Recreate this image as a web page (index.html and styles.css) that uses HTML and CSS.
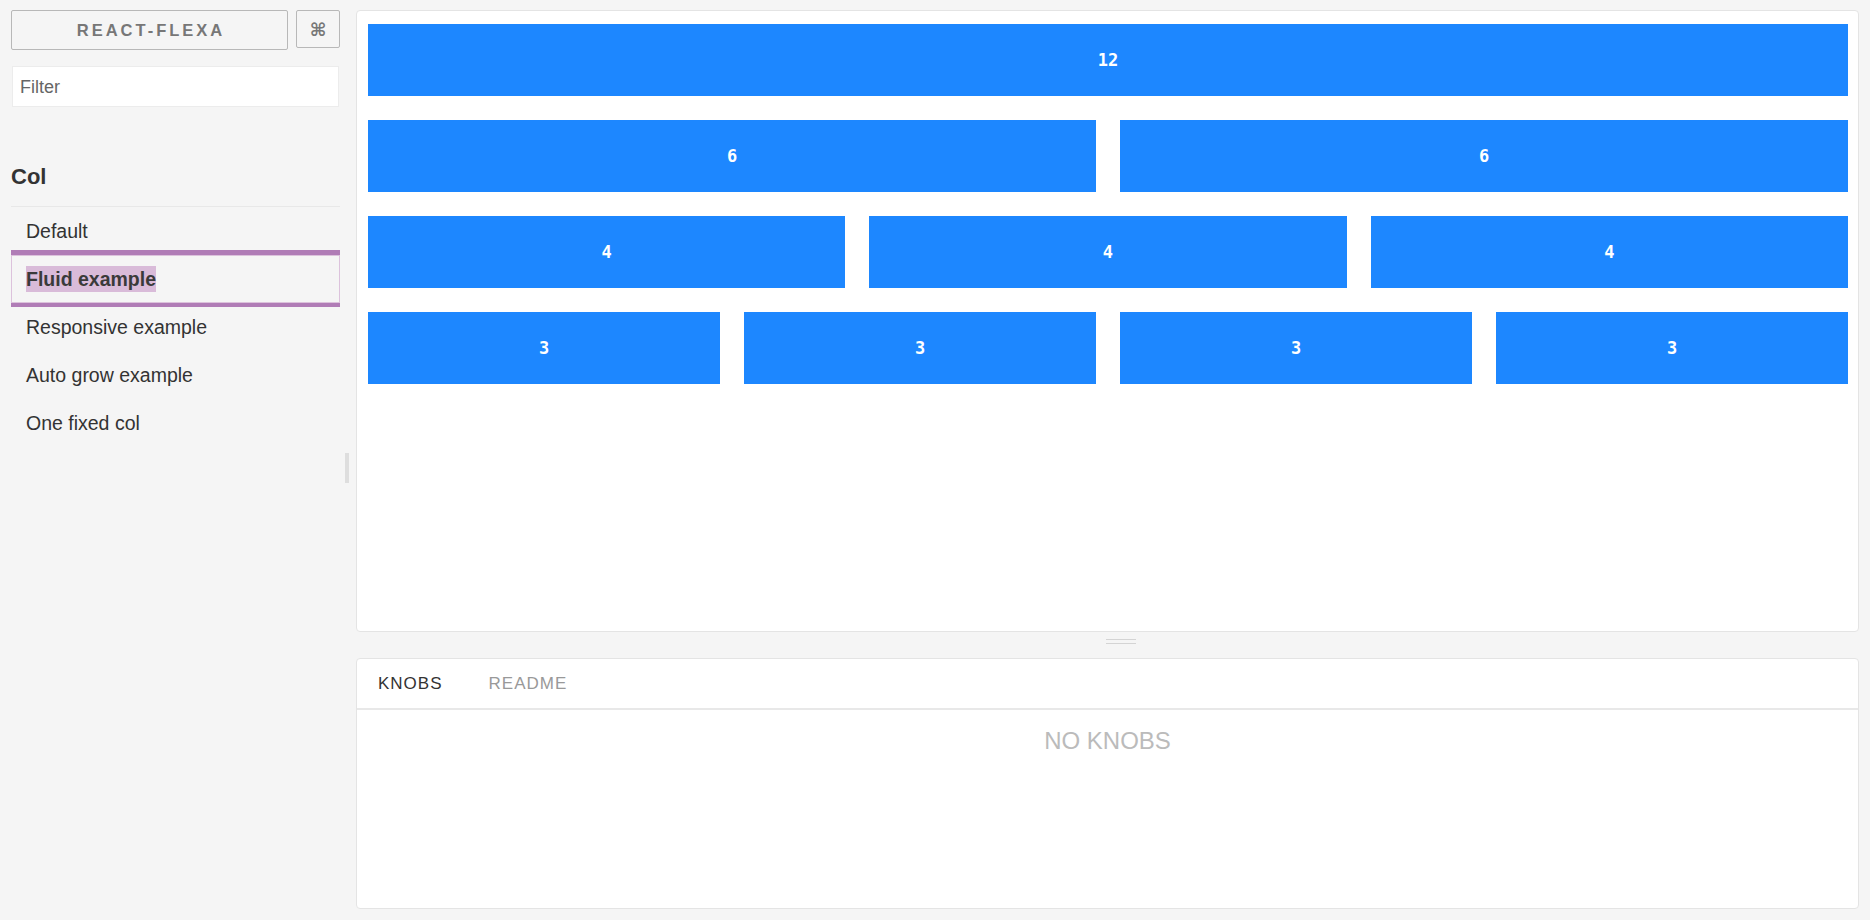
FILE: index.html
```html
<!DOCTYPE html>
<html>
<head>
<meta charset="utf-8">
<link rel="stylesheet" href="styles.css">
</head>
<body>
<div class="app">
  <aside class="sidebar">
    <div class="brand-row">
      <button class="brand">REACT-FLEXA</button>
      <button class="shortcut">⌘</button>
    </div>
    <input class="filter" type="text" placeholder="Filter">
    <h3 class="kind">Col</h3>
    <ul class="stories">
      <li class="story">Default</li>
      <li class="story active"><span class="sel">Fluid example</span></li>
      <li class="story">Responsive example</li>
      <li class="story">Auto grow example</li>
      <li class="story">One fixed col</li>
    </ul>
  </aside>
  <div class="v-resizer"><span class="v-handle"></span></div>
  <main class="main">
    <section class="preview">
      <div class="row"><div class="col c12">12</div></div>
      <div class="row"><div class="col">6</div><div class="col">6</div></div>
      <div class="row"><div class="col">4</div><div class="col">4</div><div class="col">4</div></div>
      <div class="row"><div class="col">3</div><div class="col">3</div><div class="col">3</div><div class="col">3</div></div>
    </section>
    <div class="h-resizer"><span class="h-handle"></span></div>
    <section class="addons">
      <nav class="tabs">
        <span class="tab active">KNOBS</span>
        <span class="tab">README</span>
      </nav>
      <div class="addon-body">NO KNOBS</div>
    </section>
  </main>
</div>
</body>
</html>
```

FILE: styles.css
```css
* { box-sizing: border-box; }
html, body { margin: 0; padding: 0; }
body {
  background: #f5f5f5;
  font-family: "Liberation Sans", Arial, Helvetica, sans-serif;
  color: #333;
}
.app {
  display: flex;
  height: 920px;
}
.sidebar {
  width: 340px;
  flex: none;
  padding: 10px 0 0 11px;
}
.brand-row {
  display: flex;
  align-items: flex-start;
  gap: 8px;
}
.brand {
  width: 277px;
  height: 40px;
  background: #f5f5f5;
  border: 1.5px solid #b8b8b8;
  border-radius: 2px;
  font-family: "Liberation Sans", Arial, sans-serif;
  font-weight: bold;
  font-size: 16.5px;
  letter-spacing: 3px;
  color: #777;
  padding: 0 0 0 3px;
}
.shortcut {
  width: 44px;
  height: 38px;
  background: #f5f5f5;
  border: 1.5px solid #b8b8b8;
  border-radius: 2px;
  color: #777;
  font-size: 18px;
  font-weight: bold;
  font-family: "DejaVu Sans", sans-serif;
  padding: 0;
}
.filter {
  display: block;
  margin: 16px 0 0 1px;
  width: 327px;
  height: 41px;
  border: 1px solid #ececec;
  background: #fff;
  font-family: "Liberation Sans", Arial, sans-serif;
  font-size: 18px;
  padding: 1px 0 0 7px;
  color: #333;
  outline: none;
}
.filter::placeholder { color: #666; }
.kind {
  margin: 55px 0 0 0;
  font-size: 22px;
  line-height: 30px;
  font-weight: bold;
  padding-bottom: 14px;
  border-bottom: 1px solid #e8e8e8;
  color: #333;
}
.stories {
  list-style: none;
  margin: 0;
  padding: 0;
}
.story {
  height: 48px;
  line-height: 49px;
  padding-left: 15px;
  font-size: 19.5px;
  color: #333;
}
.story.active {
  font-weight: bold;
  line-height: 48px;
  box-shadow: inset 0 0 0 1px #dcc2dc, 0 -5px 0 0 #b07cb6, 0 4px 0 0 #b07cb6;
  position: relative;
  z-index: 1;
}
.sel {
  background: #d9bbd9;
  color: #3a3a3a;
  padding: 2px 0;
}
.v-resizer {
  width: 16px;
  flex: none;
  display: flex;
  align-items: center;
  padding: 15px 0 0 5px;
}
.v-handle {
  width: 4px;
  height: 30px;
  background: #dedede;
}
.main {
  flex: 1;
  display: flex;
  flex-direction: column;
  padding: 10px 11px 11px 0;
}
.preview {
  height: 622px;
  flex: none;
  background: #fff;
  border: 1px solid #e4e4e4;
  border-radius: 4px;
  padding: 13px 10px 0 11px;
  display: flex;
  flex-direction: column;
  gap: 24px;
}
.row {
  display: flex;
  gap: 24px;
}
.col {
  flex: 1;
  height: 72px;
  background: #1d87ff;
  color: #fff;
  display: flex;
  align-items: center;
  justify-content: center;
  font-family: "DejaVu Sans Mono", "Liberation Mono", monospace;
  font-weight: bold;
  font-size: 17px;
}
.h-resizer {
  height: 26px;
  flex: none;
  display: flex;
  align-items: flex-start;
  padding: 7px 0 0 750px;
}
.h-handle {
  width: 30px;
  height: 5px;
  border-top: 1.5px solid #d4d4d4;
  border-bottom: 1.5px solid #d4d4d4;
}
.addons {
  flex: 1;
  background: #fff;
  border: 1px solid #e4e4e4;
  border-radius: 4px;
  display: flex;
  flex-direction: column;
}
.tabs {
  height: 51px;
  flex: none;
  border-bottom: 2px solid #e8e8e8;
  display: flex;
  align-items: center;
  gap: 46px;
  padding: 0 0 0 21px;
}
.tab {
  font-size: 17px;
  letter-spacing: 1px;
  color: #999;
}
.tab.active { color: #333; }
.addon-body {
  text-align: center;
  font-size: 24px;
  color: #bbb;
  padding-top: 17px;
}
```
